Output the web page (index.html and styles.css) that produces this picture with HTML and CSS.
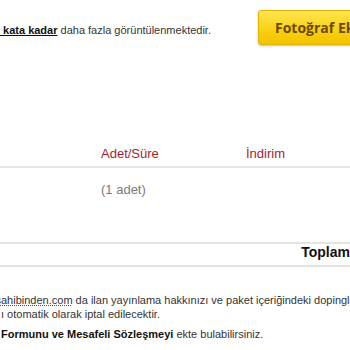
FILE: index.html
```html
<!DOCTYPE html>
<html lang="tr">
<head>
<meta charset="utf-8">
<link rel="stylesheet" href="styles.css">
</head>
<body>
<div class="page">
  <div class="top">
    <p class="intro"><b class="hl">&nbsp;kata kadar</b> daha fazla görüntülenmektedir.</p>
    <button class="btn">Fotoğraf Ekle</button>
  </div>

  <div class="table">
    <div class="row head">
      <span class="cell c1"></span>
      <span class="cell c2">Adet/Süre</span>
      <span class="cell c3">İndirim</span>
    </div>
    <div class="row body">
      <span class="cell c1"></span>
      <span class="cell c2 muted">(1 adet)</span>
      <span class="cell c3"></span>
    </div>
    <div class="total">Toplam</div>
  </div>

  <div class="notes">
    <p class="note n1"><a class="link">sahibinden.com</a> da ilan yayınlama hakkınızı ve paket içeriğindeki dopingleri</p>
    <p class="note n2">ı otomatik olarak iptal edilecektir.</p>
    <p class="note n3"><b>Formunu ve Mesafeli Sözleşmeyi</b> ekte bulabilirsiniz.</p>
  </div>
</div>
</body>
</html>
```

FILE: styles.css
```css
html, body {
  margin: 0;
  padding: 0;
  overflow: hidden;
  background: #fff;
}
.page {
  width: 350px;
  font-family: "Liberation Sans", Arial, sans-serif;
  font-size: 11px;
  color: #333;
}
.top {
  display: flex;
  align-items: flex-start;
  padding-top: 10px;
  height: 35px;
}
.intro {
  flex: 0 0 258px;
  margin: 0;
  padding-top: 13px;
  line-height: 14px;
  white-space: nowrap;
}
.hl {
  color: #111;
  text-decoration: underline;
}
.btn {
  flex: 0 0 auto;
  height: 35px;
  box-sizing: border-box;
  margin: 0;
  padding: 0 15px 0 16px;
  border: 1px solid #e3b400;
  border-radius: 3px;
  background: linear-gradient(#ffe650, #f9cf10 60%, #f3c300);
  box-shadow: 0 1px 2px rgba(0,0,0,0.25);
  font-family: "Open Sans", sans-serif;
  font-weight: 700;
  font-size: 14px;
  line-height: 29px;
  color: #6a4a00;
  white-space: nowrap;
  text-align: left;
}
.table {
  margin-top: 101px;
}
.row {
  display: grid;
  grid-template-columns: 101px 145px 1fr;
  font-size: 13px;
  line-height: 16px;
}
.head {
  padding-bottom: 4px;
  border-bottom: 2px solid #e6e6e6;
  color: #a51c30;
}
.body {
  padding-top: 14px;
}
.muted {
  color: #7a7a7a;
}
.total {
  margin-top: 44px;
  border-top: 2px solid #e4e4e4;
  border-bottom: 2px solid #e4e4e4;
  padding-bottom: 5px;
  font-size: 14px;
  line-height: 16px;
  font-weight: 700;
  color: #111;
  text-align: right;
}
.notes {
  padding-top: 26px;
}
.note {
  margin: 0;
  line-height: 14px;
  white-space: nowrap;
}
.n1 {
  margin-left: -4.5px;
}
.n2 {
  margin-left: 1px;
}
.n3 {
  margin-top: 6px;
  margin-left: 1px;
}
.note b {
  color: #111;
}
.link {
  color: #333;
  text-decoration: underline dotted #555;
}
```
